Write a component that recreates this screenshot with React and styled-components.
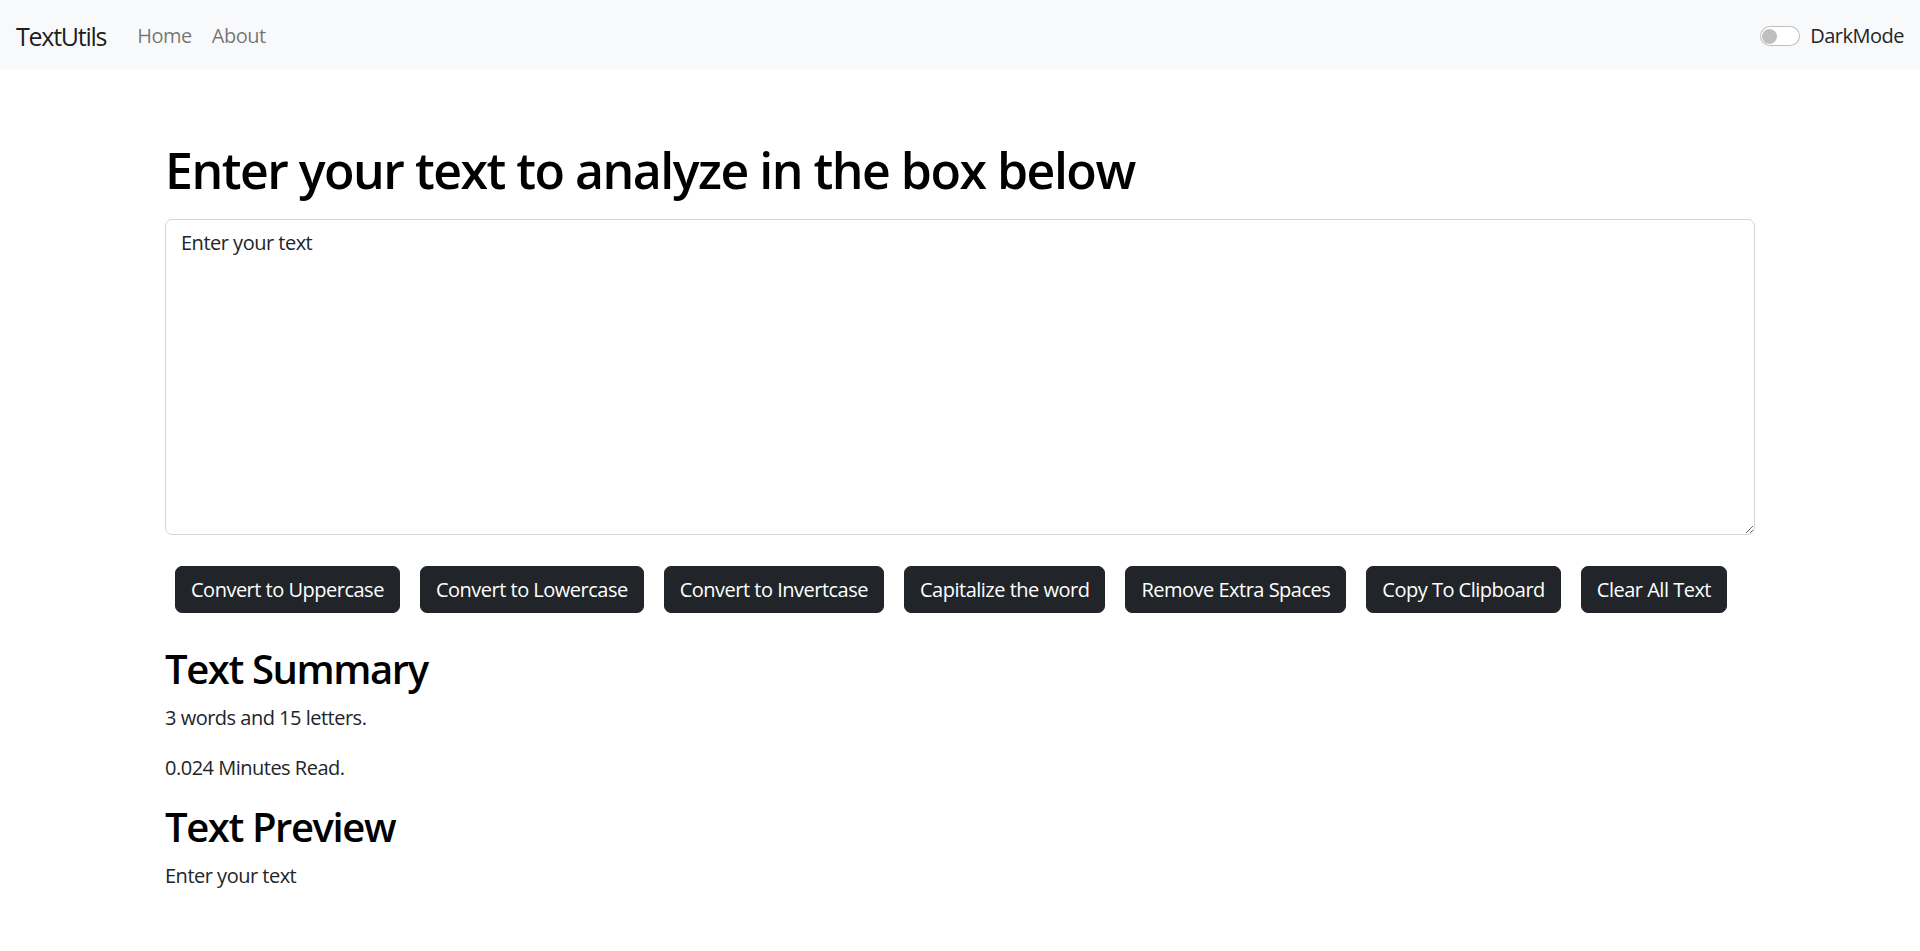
import { useState } from 'react'
import styled, { createGlobalStyle } from 'styled-components'

const GlobalStyle = createGlobalStyle`
  body {
    margin: 0;
    font-family: "Open Sans", "Noto Sans", sans-serif;
    font-size: 20px;
    line-height: 30px;
    letter-spacing: -0.025em;
    color: #212529;
    background: #fff;
  }
  * { box-sizing: border-box; }
`

const App = () => {
  const [text, setText] = useState('Enter your text')
  const [dark, setDark] = useState(false)

  const words = text.split(/\s+/).filter((w) => w.length > 0).length
  const minutes = (0.008 * words).toFixed(3)

  return (
    <>
      <GlobalStyle />
      <Navbar>
        <NavLeft>
          <Brand href="#">TextUtils</Brand>
          <NavLink href="#">Home</NavLink>
          <NavLink href="#">About</NavLink>
        </NavLeft>
        <SwitchLabel>
          <SwitchTrack $on={dark} onClick={() => setDark(!dark)}>
            <SwitchKnob $on={dark} />
          </SwitchTrack>
          DarkMode
        </SwitchLabel>
      </Navbar>

      <Main>
        <H1>Enter your text to analyze in the box below</H1>
        <TextArea rows={10} value={text} onChange={(e) => setText(e.target.value)} />
        <ButtonRow>
          <Button onClick={() => setText(text.toUpperCase())}>Convert to Uppercase</Button>
          <Button onClick={() => setText(text.toLowerCase())}>Convert to Lowercase</Button>
          <Button>Convert to Invertcase</Button>
          <Button>Capitalize the word</Button>
          <Button>Remove Extra Spaces</Button>
          <Button>Copy To Clipboard</Button>
          <Button onClick={() => setText('')}>Clear All Text</Button>
        </ButtonRow>

        <H2 $top={32}>Text Summary</H2>
        <P>{words} words and {text.length} letters.</P>
        <P>{minutes} Minutes Read.</P>
        <H2>Text Preview</H2>
        <P>{text.length > 0 ? text : 'Nothing to preview'}</P>
      </Main>
    </>
  )
}

const Navbar = styled.nav`
  display: flex;
  align-items: center;
  justify-content: space-between;
  height: 70px;
  padding: 2px 16px 0 16px;
  background-color: #f8f9fa;
`

const NavLeft = styled.div`
  display: flex;
  align-items: center;
`

const Brand = styled.a`
  font-size: 25px;
  line-height: 37px;
  letter-spacing: -0.05em;
  color: rgba(0, 0, 0, 0.9);
  text-decoration: none;
  margin-right: 21px;
`

const NavLink = styled.a`
  padding: 10px;
  font-size: 20px;
  color: rgba(0, 0, 0, 0.55);
  text-decoration: none;
`

const SwitchLabel = styled.label`
  display: flex;
  align-items: center;
  gap: 10px;
  font-size: 20px;
  color: #212529;
`

const SwitchTrack = styled.span`
  display: flex;
  align-items: center;
  width: 40px;
  height: 20px;
  padding: 0 1px;
  border-radius: 10px;
  border: 1px solid ${(props) => (props.$on ? '#0d6efd' : 'rgba(0,0,0,0.25)')};
  background: ${(props) => (props.$on ? '#0d6efd' : '#fff')};
  justify-content: ${(props) => (props.$on ? 'flex-end' : 'flex-start')};
  cursor: pointer;
`

const SwitchKnob = styled.span`
  width: 15px;
  height: 15px;
  border-radius: 50%;
  background: ${(props) => (props.$on ? '#fff' : '#bfbfbf')};
`

const Main = styled.main`
  width: 1590px;
  margin: 70px auto 0;
`

const H1 = styled.h1`
  margin: 0 0 19px;
  font-size: 50px;
  line-height: 60px;
  font-weight: 600;
  letter-spacing: -0.03em;
  color: #000;
`

const TextArea = styled.textarea`
  display: block;
  width: 100%;
  height: 316px;
  padding: 8px 15px 6px;
  font-family: inherit;
  font-size: 20px;
  line-height: 30px;
  letter-spacing: inherit;
  color: #212529;
  border: 1px solid #d3d7dc;
  border-radius: 7px;
  resize: vertical;
  outline: none;
`

const ButtonRow = styled.div`
  display: flex;
  margin-top: 31px;
`

const Button = styled.button`
  flex-shrink: 0;
  margin: 0 10px;
  padding: 7.5px 15px;
  font-family: inherit;
  font-size: 20px;
  line-height: 30px;
  letter-spacing: inherit;
  white-space: nowrap;
  color: #fff;
  background-color: #212529;
  border: 1px solid #212529;
  border-radius: 7px;
  cursor: pointer;
`

const H2 = styled.h2`
  margin: ${(props) => props.$top || 0}px 0 10px;
  font-size: 40px;
  line-height: 48px;
  font-weight: 600;
  letter-spacing: -0.035em;
  color: #000;
`

const P = styled.p`
  margin: 0 0 20px;
`

export default App
